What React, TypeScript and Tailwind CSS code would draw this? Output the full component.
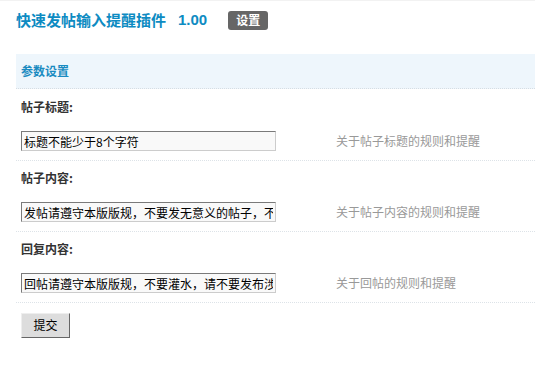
import React from "react";

const rows = [
  { label: "帖子标题:", value: "标题不能少于8个字符", desc: "关于帖子标题的规则和提醒" },
  { label: "帖子内容:", value: "发帖请遵守本版版规，不要发无意义的帖子，不要灌水", desc: "关于帖子内容的规则和提醒" },
  { label: "回复内容:", value: "回帖请遵守本版版规，不要灌水，请不要发布涉及政治的内容", desc: "关于回帖的规则和提醒" },
];

export default function App() {
  return (
    <div
      className="w-[535px] h-[365px] bg-white overflow-hidden border-t border-[#f2f2f2]"
      style={{ fontFamily: '"Noto Sans CJK SC", "Liberation Sans", sans-serif' }}
    >
      <div className="h-[53px] pl-[16px] pt-[9px] flex items-start">
        <div className="flex items-center h-[20px]">
          <span className="text-[15px] font-bold text-[#0d8bc2] leading-[20px]">快速发帖输入提醒插件</span>
          <span
            className="ml-[12px] text-[15px] font-bold text-[#0d8bc2] leading-[20px]"
            style={{ fontFamily: '"Liberation Sans", sans-serif' }}
          >
            1.00
          </span>
          <span className="ml-[21px] w-[40px] h-[19px] rounded-[3px] bg-[#666666] text-white text-[12px] font-bold flex items-center justify-center leading-none">
            设置
          </span>
        </div>
      </div>
      <div className="ml-[16px]">
        <div className="h-[35px] bg-[#eef6fc] border-b border-dotted border-[#d6dde3] flex items-center pl-[5px]">
          <span className="text-[12px] font-bold text-[#1a8bc1]">参数设置</span>
        </div>
        {rows.map((r, i) => (
          <div
            key={r.label}
            className={`border-b border-dotted border-[#dde3e8] pb-[9px] ${i === 0 ? "pt-[1px]" : ""}`}
          >
            <div className="h-[34px] flex items-center pl-[5px]">
              <span className="text-[12px] font-bold text-[#333333]">{r.label}</span>
            </div>
            <div className="mt-[7px] flex items-center pl-[5px]">
              <input
                readOnly
                defaultValue={r.value}
                className="w-[255px] h-[20px] px-[2px] text-[12px] text-black bg-[#f9f9f9] border border-t-[#7a7a7a] border-l-[#7a7a7a] border-r-[#cccccc] border-b-[#cccccc] outline-none leading-[18px]"
                style={{ fontFamily: '"Noto Sans CJK SC", "Liberation Sans", sans-serif' }}
              />
              <span className="ml-[60px] text-[12px] text-[#999999]">{r.desc}</span>
            </div>
          </div>
        ))}
        <div className="pl-[5px] pt-[8px]">
          <button className="w-[49px] h-[25px] bg-[#dddddd] text-[12px] text-black border border-t-[#eeeeee] border-l-[#eeeeee] border-r-[#666666] border-b-[#666666]">
            提交
          </button>
        </div>
      </div>
    </div>
  );
}
